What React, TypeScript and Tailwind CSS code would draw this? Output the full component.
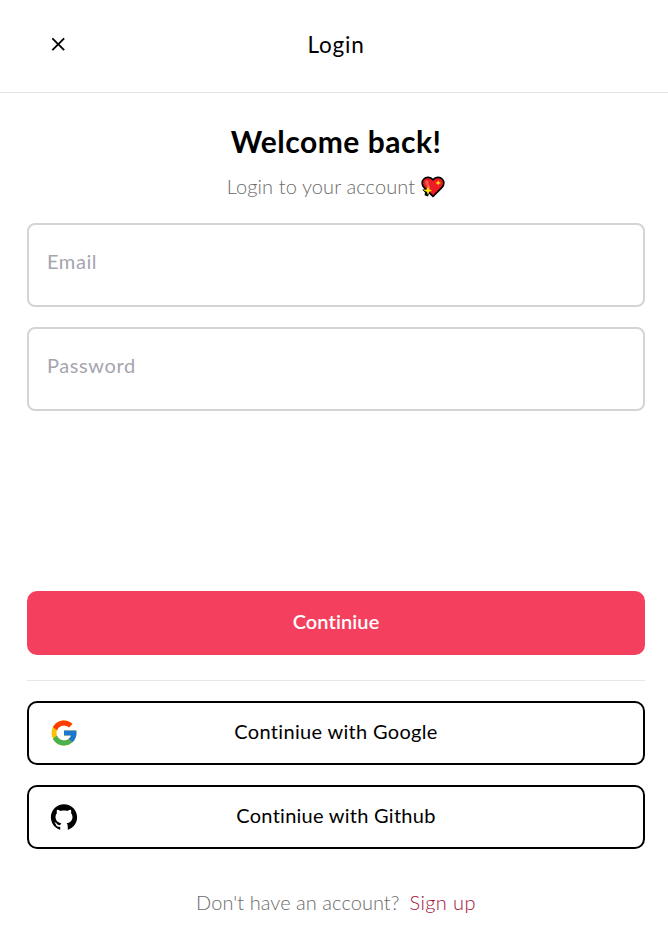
import { AiFillGithub } from "react-icons/ai";
import { FcGoogle } from "react-icons/fc";
import { IoMdClose } from "react-icons/io";
import type { ReactNode } from "react";

function SparklingHeart() {
  return (
    <svg viewBox="0 0 24 22" className="mt-[2px] ml-[6px] h-[22px] w-6 shrink-0" aria-label="sparkling heart">
      <path
        d="M12 20.4 3.2 11.7C0.6 9 0.6 5.2 2.8 3 5.2 0.6 9.3 0.7 12 3.8 14.7 0.7 18.8 0.6 21.2 3 23.4 5.2 23.4 9 20.8 11.7Z"
        fill="#ed1b24"
        stroke="#000"
        strokeWidth="1.7"
        strokeLinejoin="round"
      />
      <path d="M4.3 5.2C5.2 4 6.9 4 7.6 5.2 6.4 8.3 10.4 10 8.9 13.2 7 11.3 4.1 9 4.3 5.2Z" fill="#f45a4e" />
      <path d="M1.2 13.6 5 13.4 6 15.6 8.2 17.4 7 20.6 3.6 19.2 4 16.6Z" fill="#000" />
      <path d="M7 10.2 8.2 13.2 11.2 14.5 8.2 15.8 7 19 5.8 15.8 2.6 14.5 5.8 13.2Z" fill="#ffe600" />
      <path d="M17.2 4.2 18 6.1 20 6.9 18 7.7 17.2 9.6 16.4 7.7 14.4 6.9 16.4 6.1Z" fill="#ffe100" />
    </svg>
  );
}

function Field({ label, type }: { label: string; type: string }) {
  return (
    <input
      type={type}
      placeholder={label}
      className="h-[84px] w-full rounded-lg border-2 border-[#d4d4d4] bg-white px-[18px] pb-2 text-[20px] tracking-[0.6px] text-black outline-none placeholder:text-[#a5a5af]"
    />
  );
}

function ProviderButton({ icon, children }: { icon: ReactNode; children: ReactNode }) {
  return (
    <button className="grid h-16 w-full grid-cols-[30px_1fr_30px] items-center rounded-[10px] border-2 border-black bg-white px-5 text-[20px] font-normal text-black">
      {icon}
      {children}
    </button>
  );
}

export default function App() {
  return (
    <main className="h-[945px] w-[668px] overflow-hidden bg-white font-['Lato','Noto_Sans',sans-serif] text-black">
      <header className="grid h-[93px] grid-cols-[30px_1fr_30px] items-center border-b border-[#e5e5e5] pr-[43px] pb-1 pl-[47px]">
        <button aria-label="Close">
          <IoMdClose size={22.5} />
        </button>
        <h1 className="pt-[2px] text-center text-[22.5px] leading-7">
          <span className="tracking-[0.8px]">Login</span>
        </h1>
      </header>
      <section className="flex flex-col pr-[23px] pl-[27px]">
        <h2 className="mt-[29px] text-center text-[30px] leading-[38px] font-bold">
          <span className="tracking-[0.5px]">Welcome back!</span>
        </h2>
        <div className="mt-3 flex h-[28px] items-center justify-center text-[20px] font-light text-[#6b6b6b]">
          <span className="tracking-[0.1px]">Login to your account</span>
          <SparklingHeart />
        </div>
        <div className="mt-[23px] flex flex-col gap-5">
          <Field label="Email" type="email" />
          <Field label="Password" type="password" />
        </div>
        <button className="mt-[180px] h-16 rounded-[10px] bg-[#f43f5e] pb-[4px] text-[20px] font-semibold text-white">
          <span className="tracking-[0.1px]">Continiue</span>
        </button>
        <hr className="mt-[25px] mb-5 border-[#e5e7eb]" />
        <div className="flex flex-col gap-5">
          <ProviderButton icon={<FcGoogle size={30} />}>
            <span className="pb-[4px] tracking-[0.32px]">Continiue with Google</span>
          </ProviderButton>
          <ProviderButton icon={<AiFillGithub size={30} />}>
            <span className="pb-[4px] tracking-[0.26px]">Continiue with Github</span>
          </ProviderButton>
        </div>
        <footer className="mt-[39px] flex justify-center gap-[10px] text-[20px] leading-[28px] font-light text-[#6b6b6b]">
          <span className="tracking-[0.05px]">Don't have an account?</span>
          <a className="tracking-[0.4px] text-[#9f1239]">Sign up</a>
        </footer>
      </section>
    </main>
  );
}
